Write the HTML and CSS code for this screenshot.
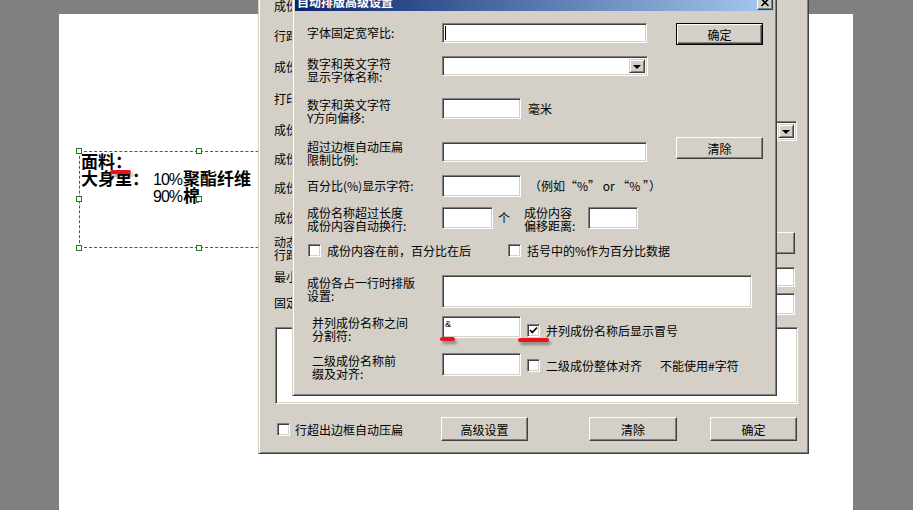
FILE: index.html
```html
<!DOCTYPE html>
<html>

<head>
  <meta charset="utf-8">
  <title>自动排版高级设置</title>
  <link rel="stylesheet" href="styles.css">
</head>

<body>
  <div class="sheet"></div>

  <!-- text frame on the label canvas -->
  <div class="textbox">
    <div class="tb-line"><b>面料：</b></div>
    <div class="tb-line"><b class="tb-key">大身里：</b><span class="num">10%</span><b>聚酯纤维</b></div>
    <div class="tb-line"><span class="tb-key"></span><span class="num">90%</span><b>棉</b></div>
    <span class="handle h-tl"></span>
    <span class="handle h-tc"></span>
    <span class="handle h-ml"></span>
    <span class="handle h-mc"></span>
    <span class="handle h-bl"></span>
    <span class="handle h-bc"></span>
  </div>
  <span class="mark mark-text"></span>

  <!-- main dialog (behind) -->
  <div class="win back">
    <div class="back-rows">
      <div class="brow"><span>成份名称：</span></div>
      <div class="brow"><span>行距：</span></div>
      <div class="brow"><span>成份字体：</span></div>
      <div class="brow"><span>打印方向：</span></div>
      <div class="brow"><span>成份对齐：</span><span class="select b-select"><span class="drop"><i class="arrow"></i></span></span></div>
      <div class="brow"><span>成份间距：</span></div>
      <div class="brow"><span>成份行距：</span></div>
      <div class="brow"><span>成份缩进：</span></div>
      <div class="brow"><span class="two">动态调整<br>行距：</span><span class="btn b-btn"></span></div>
      <div class="brow"><span>最小字号：</span><span class="field b-field b-f1"></span></div>
      <div class="brow"><span>固定字号：</span><span class="field b-field b-f2"></span></div>
    </div>
    <div class="field b-memo"></div>
    <div class="back-foot">
      <span class="chk foot-chk"><span class="box"></span>行超出边框自动压扁</span>
      <span class="btn fb fb-1">高级设置</span>
      <span class="btn fb fb-2">清除</span>
      <span class="btn fb fb-3">确定</span>
    </div>
  </div>

  <!-- advanced settings dialog (front) -->
  <div class="win front">
    <div class="title">
      <span>自动排版高级设置</span>
      <span class="btn close">
        <svg width="10" height="9" viewBox="0 0 10 9"><path d="M1.5 1 L8.5 8 M8.5 1 L1.5 8" stroke="#000" stroke-width="1.6" fill="none"/></svg>
      </span>
    </div>
    <div class="front-body">
      <div class="frow">
        <span class="lbl one">字体固定宽窄比:</span>
        <span class="field f-wide"><i class="caret"></i></span>
        <span class="btn default rbtn">确定</span>
      </div>
      <div class="frow">
        <span class="lbl l-down1">数字和英文字符<br>显示字体名称:</span>
        <span class="select f-select"><span class="drop"><i class="arrow"></i></span></span>
      </div>
      <div class="frow">
        <span class="lbl">数字和英文字符<br>Y方向偏移:</span>
        <span class="field f-short f-h21"></span>
        <span class="after a-21">毫米</span>
      </div>
      <div class="frow">
        <span class="lbl l-down3">超过边框自动压扁<br>限制比例:</span>
        <span class="field f-wide f-down5"></span>
        <span class="btn rbtn">清除</span>
      </div>
      <div class="frow">
        <span class="lbl l-22">百分比(%)显示字符:</span>
        <span class="field f-short"></span>
        <span class="after a-22 note">（例如“%” or “% ”）</span>
      </div>
      <div class="frow">
        <span class="lbl l-up1">成份名称超过长度<br>成份内容自动换行:</span>
        <span class="field f-tiny"></span>
        <span class="after a-22 unit">个</span>
        <span class="sublbl">成份内容<br>偏移距离:</span>
        <span class="field f-tiny2"></span>
      </div>
      <div class="frow">
        <span class="chk c-first"><span class="box"></span>成份内容在前，百分比在后</span>
        <span class="chk"><span class="box"></span>括号中的%作为百分比数据</span>
      </div>
      <div class="frow">
        <span class="lbl l-down1">成份各占一行时排版<br>设置:</span>
        <span class="field f-memo"></span>
      </div>
      <div class="frow">
        <span class="lbl ind">并列成份名称之间<br>分割符:</span>
        <span class="field f-short amp">&amp;</span>
        <span class="chk c-right c-down7"><span class="box checked"><svg width="11" height="11" viewBox="0 0 11 11"><path d="M2 5 L4.3 7.5 L9 2.5" stroke="#000" stroke-width="1.8" fill="none"/></svg></span>并列成份名称后显示冒号</span>
      </div>
      <div class="frow">
        <span class="lbl ind l-down1">二级成份名称前<br>缀及对齐:</span>
        <span class="field f-short f-h23"></span>
        <span class="chk c-right c-down5"><span class="box"></span>二级成份整体对齐<span class="hint">不能使用#字符</span></span>
      </div>
    </div>
  </div>

  <span class="mark mark-a"></span>
  <span class="mark mark-b"></span>
</body>

</html>
```

FILE: styles.css
```css
* {
  box-sizing: border-box;
}

html,
body {
  margin: 0;
  height: 100%;
}

body {
  position: relative;
  overflow: hidden;
  background: #808080;
  font-family: "Noto Sans CJK SC", sans-serif;
  font-size: 12px;
  color: #000;
}

.sheet {
  margin: 14px 0 0 59px;
  width: 794px;
  height: 500px;
  background: #fff;
}

/* text frame */
.textbox {
  position: absolute;
  left: 79px;
  top: 151px;
  width: 240px;
  height: 97px;
  border: 1px dashed #1f7a1f;
  padding-left: 1px;
  font-size: 17px;
  line-height: 17px;
  white-space: nowrap;
}

.tb-line {
  display: flex;
  align-items: baseline;
  height: 17px;
}

.tb-key {
  width: 72px;
  flex: none;
}

.num {
  font-family: "Liberation Sans", sans-serif;
  font-size: 16px;
  letter-spacing: -1px;
  margin-right: 1px;
}

.handle {
  position: absolute;
  width: 6px;
  height: 6px;
  border: 1px solid #1f7a1f;
  background: #fff;
}

.h-tl { left: -4px; top: -4px; }
.h-tc { left: 116px; top: -4px; }
.h-ml { left: -4px; top: 44px; }
.h-mc { left: 116px; top: 44px; }
.h-bl { left: -4px; top: 93px; }
.h-bc { left: 116px; top: 93px; }

/* red pen marks */
.mark {
  position: absolute;
  height: 4px;
  background: #e8141b;
  border-radius: 2px;
  box-shadow: 2px 3px 3px rgba(0, 0, 0, 0.35);
}

.mark-text { left: 110px; top: 170px; width: 21px; }
.mark-a { left: 440px; top: 337px; width: 15px; }
.mark-b { left: 518px; top: 338px; width: 31px; }

/* windows classic chrome */
.win {
  position: absolute;
  background: #d4d0c8;
  border: 1px solid;
  border-color: #d4d0c8 #404040 #404040 #d4d0c8;
  box-shadow: inset 1px 1px #fff, inset -1px -1px #808080;
  white-space: nowrap;
}

.field {
  display: block;
  flex: none;
  background: #fff;
  border: 1px solid;
  border-color: #808080 #fff #fff #808080;
  box-shadow: inset 1px 1px #404040, inset -1px -1px #d4d0c8;
}

.btn {
  display: flex;
  align-items: center;
  justify-content: center;
  flex: none;
  background: #d4d0c8;
  border: 1px solid;
  border-color: #fff #404040 #404040 #fff;
  box-shadow: inset -1px -1px #808080;
}

.btn.default {
  border-color: #000;
  box-shadow: inset 1px 1px #fff, inset -1px -1px #404040, inset -2px -2px #808080;
}

.select {
  display: flex;
  justify-content: flex-end;
  flex: none;
  padding: 2px;
  background: #fff;
  border: 1px solid;
  border-color: #808080 #fff #fff #808080;
  box-shadow: inset 1px 1px #404040, inset -1px -1px #d4d0c8;
}

.drop {
  display: flex;
  align-items: center;
  justify-content: center;
  width: 16px;
  height: 100%;
  background: #d4d0c8;
  border: 1px solid;
  border-color: #d4d0c8 #404040 #404040 #d4d0c8;
  box-shadow: inset 1px 1px #fff, inset -1px -1px #808080;
}

.arrow {
  width: 0;
  height: 0;
  border-left: 4px solid transparent;
  border-right: 4px solid transparent;
  border-top: 4px solid #000;
  margin-top: 1px;
}

.chk {
  display: flex;
  align-items: center;
  gap: 6px;
  line-height: 13px;
}

.box {
  display: flex;
  align-items: center;
  justify-content: center;
  width: 13px;
  height: 13px;
  flex: none;
  background: #fff;
  border: 1px solid;
  border-color: #808080 #fff #fff #808080;
  box-shadow: inset 1px 1px #404040, inset -1px -1px #d4d0c8;
}

/* back dialog */
.back {
  left: 258px;
  top: -12px;
  width: 551px;
  height: 466px;
  padding: 1px 11px 0 15px;
}

.back-rows {
  display: grid;
  grid-template-rows: 30px 31px 31px 32px 30px 28px 30px 31px 30px 26px 27px;
}

.brow {
  display: flex;
  align-items: center;
  justify-content: space-between;
}

.two {
  line-height: 13px;
}

.b-select {
  width: 300px;
  height: 20px;
  align-self: flex-start;
  margin-top: 7px;
}

.b-btn {
  width: 300px;
  height: 22px;
  align-self: flex-start;
  margin-top: -1px;
  margin-right: 2px;
}

.b-field {
  width: 300px;
  align-self: flex-start;
  margin-top: 4px;
  margin-right: 2px;
}

.b-f1 { height: 20px; }
.b-f2 { height: 22px; }

.b-memo {
  margin: 11px -1px 0 1px;
  height: 77px;
}

.back-foot {
  display: flex;
  align-items: center;
  height: 24px;
  margin-top: 13px;
}

.foot-chk {
  width: 166px;
  margin-left: 3px;
  gap: 5px;
}

.fb {
  height: 24px;
  width: 87px;
}

.fb-2 { width: 88px; margin-left: 61px; }
.fb-3 { margin-left: 33px; }

/* front dialog */
.front {
  left: 292px;
  top: -10px;
  width: 485px;
  height: 406px;
  padding: 2px;
}

.title {
  display: flex;
  align-items: center;
  justify-content: space-between;
  height: 18px;
  padding: 0 1px 0 2px;
  background: linear-gradient(to right, #0a246a, #a6caf0);
  color: #fff;
  font-weight: bold;
  line-height: 18px;
}

.close {
  width: 16px;
  height: 14px;
  margin-top: 1px;
}

.front-body {
  display: grid;
  grid-template-rows: 33px 42px 39px 38px 32px 36px 32px 41px 37px auto;
  padding: 12px 11px 0 12px;
}

.frow {
  display: flex;
  align-items: flex-start;
}

.lbl {
  width: 135px;
  flex: none;
  line-height: 13px;
}

.one { line-height: 20px; }
.l-22 { line-height: 22px; }
.l-down1 { margin-top: 1px; }
.l-down3 { margin-top: 3px; }
.l-up1 { margin-top: -1px; }
.ind { padding-left: 5px; }

.f-wide { width: 205px; height: 20px; }
.f-down5 { margin-top: 5px; }
.f-short { width: 79px; height: 22px; }
.f-h21 { height: 21px; }
.f-h23 { height: 23px; }
.f-tiny { width: 51px; height: 22px; }
.f-tiny2 { width: 50px; height: 22px; }
.f-memo { width: 310px; height: 33px; }
.f-select { width: 206px; height: 20px; }

.caret {
  display: block;
  width: 1px;
  height: 14px;
  margin: 2px 0 0 2px;
  background: #000;
}

.amp {
  padding: 3px 0 0 2px;
  font-family: "Liberation Sans", sans-serif;
  font-size: 9px;
  line-height: 9px;
}

.rbtn {
  width: 87px;
  height: 22px;
  margin-left: auto;
}

.after { margin-left: 7px; }
.a-21 { line-height: 21px; }
.a-22 { line-height: 22px; }
.note { margin-left: 8px; }
.unit { margin-left: 5px; }

.sublbl {
  width: 64px;
  margin: -1px 0 0 14px;
  line-height: 13px;
}

.frow .chk {
  height: 14px;
  margin-top: 0;
}

.c-first {
  width: 200px;
  margin-left: 1px;
}

.c-right { margin-left: 6px; }
.c-down7 { margin-top: 7px !important; }
.c-down5 { margin-top: 5px !important; }

.hint { margin-left: 12px; }
```
